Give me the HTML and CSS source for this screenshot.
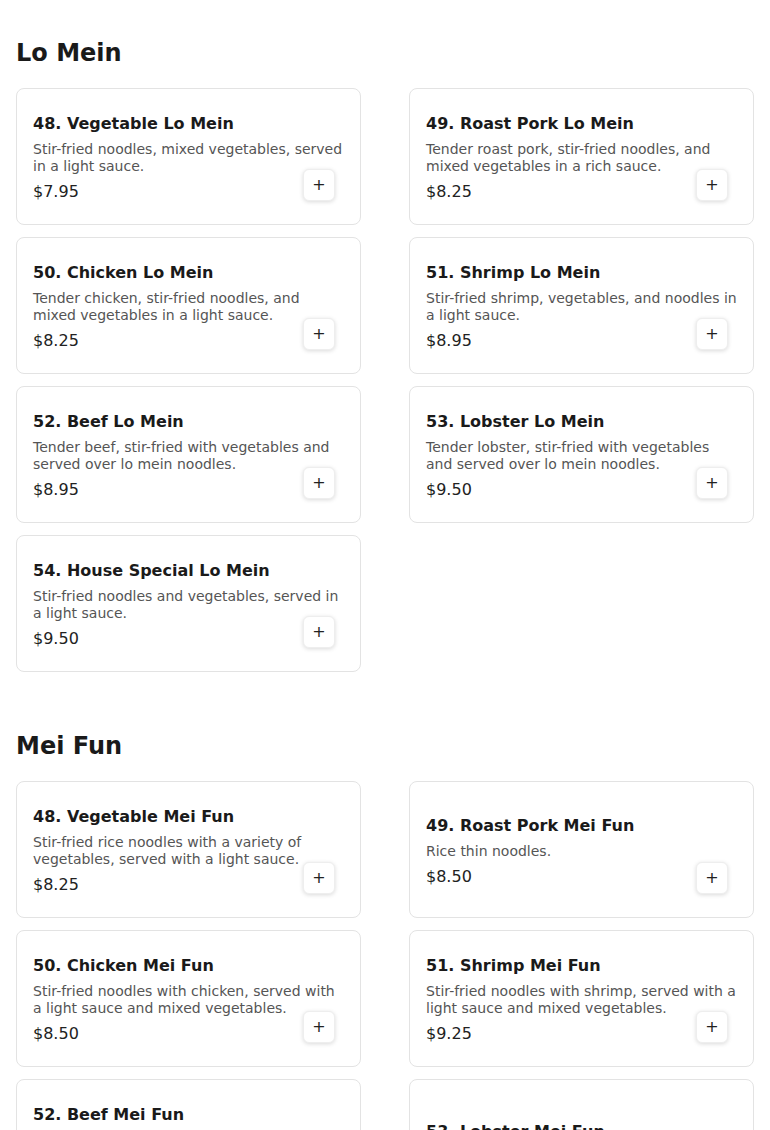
FILE: index.html
```html
<!DOCTYPE html>
<html>
<head>
  <meta charset="utf-8">
  <meta name="viewport" content="width=device-width, initial-scale=1.0">
  <title>Menu</title>
  <link rel="stylesheet" href="styles.css">
</head>
<body>
  <main>
    <section class="menu-section">
      <h2>Lo Mein</h2>
      <div class="menu-grid">
        <div class="menu-item">
          <div class="item-info">
            <h3>48. Vegetable Lo Mein</h3>
            <p class="desc">Stir-fried noodles, mixed vegetables, served in a light sauce.</p>
            <p class="price">$7.95</p>
          </div>
          <button class="add-btn">+</button>
        </div>
        <div class="menu-item">
          <div class="item-info">
            <h3>49. Roast Pork Lo Mein</h3>
            <p class="desc">Tender roast pork, stir-fried noodles, and mixed vegetables in a rich sauce.</p>
            <p class="price">$8.25</p>
          </div>
          <button class="add-btn">+</button>
        </div>
        <div class="menu-item">
          <div class="item-info">
            <h3>50. Chicken Lo Mein</h3>
            <p class="desc">Tender chicken, stir-fried noodles, and mixed vegetables in a light sauce.</p>
            <p class="price">$8.25</p>
          </div>
          <button class="add-btn">+</button>
        </div>
        <div class="menu-item">
          <div class="item-info">
            <h3>51. Shrimp Lo Mein</h3>
            <p class="desc">Stir-fried shrimp, vegetables, and noodles in a light sauce.</p>
            <p class="price">$8.95</p>
          </div>
          <button class="add-btn">+</button>
        </div>
        <div class="menu-item">
          <div class="item-info">
            <h3>52. Beef Lo Mein</h3>
            <p class="desc">Tender beef, stir-fried with vegetables and served over lo mein noodles.</p>
            <p class="price">$8.95</p>
          </div>
          <button class="add-btn">+</button>
        </div>
        <div class="menu-item">
          <div class="item-info">
            <h3>53. Lobster Lo Mein</h3>
            <p class="desc">Tender lobster, stir-fried with vegetables and served over lo mein noodles.</p>
            <p class="price">$9.50</p>
          </div>
          <button class="add-btn">+</button>
        </div>
        <div class="menu-item">
          <div class="item-info">
            <h3>54. House Special Lo Mein</h3>
            <p class="desc">Stir-fried noodles and vegetables, served in a light sauce.</p>
            <p class="price">$9.50</p>
          </div>
          <button class="add-btn">+</button>
        </div>
      </div>
    </section>

    <section class="menu-section">
      <h2>Mei Fun</h2>
      <div class="menu-grid">
        <div class="menu-item">
          <div class="item-info">
            <h3>48. Vegetable Mei Fun</h3>
            <p class="desc">Stir-fried rice noodles with a variety of vegetables, served with a light sauce.</p>
            <p class="price">$8.25</p>
          </div>
          <button class="add-btn">+</button>
        </div>
        <div class="menu-item">
          <div class="item-info">
            <h3>49. Roast Pork Mei Fun</h3>
            <p class="desc">Rice thin noodles.</p>
            <p class="price">$8.50</p>
          </div>
          <button class="add-btn">+</button>
        </div>
        <div class="menu-item">
          <div class="item-info">
            <h3>50. Chicken Mei Fun</h3>
            <p class="desc">Stir-fried noodles with chicken, served with a light sauce and mixed vegetables.</p>
            <p class="price">$8.50</p>
          </div>
          <button class="add-btn">+</button>
        </div>
        <div class="menu-item">
          <div class="item-info">
            <h3>51. Shrimp Mei Fun</h3>
            <p class="desc">Stir-fried noodles with shrimp, served with a light sauce and mixed vegetables.</p>
            <p class="price">$9.25</p>
          </div>
          <button class="add-btn">+</button>
        </div>
        <div class="menu-item">
          <div class="item-info">
            <h3>52. Beef Mei Fun</h3>
            <p class="desc">Stir-fried rice noodles with tender beef, served with a light sauce, onions, green peppers and mixed vegetables.</p>
            <p class="price">$9.25</p>
          </div>
          <button class="add-btn">+</button>
        </div>
        <div class="menu-item">
          <div class="item-info">
            <h3>53. Lobster Mei Fun</h3>
            <p class="desc">Rice thin noodles with lobster.</p>
            <p class="price">$10.50</p>
          </div>
          <button class="add-btn">+</button>
        </div>
      </div>
    </section>
  </main>
</body>
</html>
```

FILE: styles.css
```css
body {
  font-family: 'DejaVu Sans', 'Liberation Sans', sans-serif;
  margin: 0;
  padding: 0;
  background-color: #fff;
  color: #1a1a1a;
}

.menu-section {
  padding: 16px 16px 21px;
}

.menu-section h2 {
  font-size: 24px;
  line-height: 30px;
  font-weight: bold;
  margin: 22px 0 20px;
  color: #1a1a1a;
}

.menu-grid {
  display: grid;
  grid-template-columns: 1fr 1fr;
  column-gap: 48px;
  row-gap: 12px;
}

.menu-item {
  position: relative;
  display: flex;
  flex-direction: column;
  justify-content: center;
  padding: 23px 16px 20px;
  border: 1px solid #e3e3e3;
  border-radius: 8px;
  background-color: #fff;
}

.item-info h3 {
  font-size: 16px;
  line-height: 24px;
  font-weight: bold;
  margin: 0 0 5px;
}

.item-info .desc {
  font-size: 14px;
  line-height: 17px;
  color: #555;
  margin: 0 0 5px;
}

.item-info .price {
  font-size: 16px;
  line-height: 24px;
  margin: 0;
  color: #222;
}

.add-btn {
  position: absolute;
  right: 25px;
  bottom: 23px;
  width: 32px;
  height: 32px;
  padding: 0;
  border: 1px solid #eee;
  border-radius: 6px;
  background-color: #fff;
  box-shadow: 0 1px 4px rgba(0, 0, 0, 0.15);
  font-family: 'DejaVu Sans', sans-serif;
  font-size: 16px;
  line-height: 30px;
  color: #222;
  cursor: pointer;
}
```
